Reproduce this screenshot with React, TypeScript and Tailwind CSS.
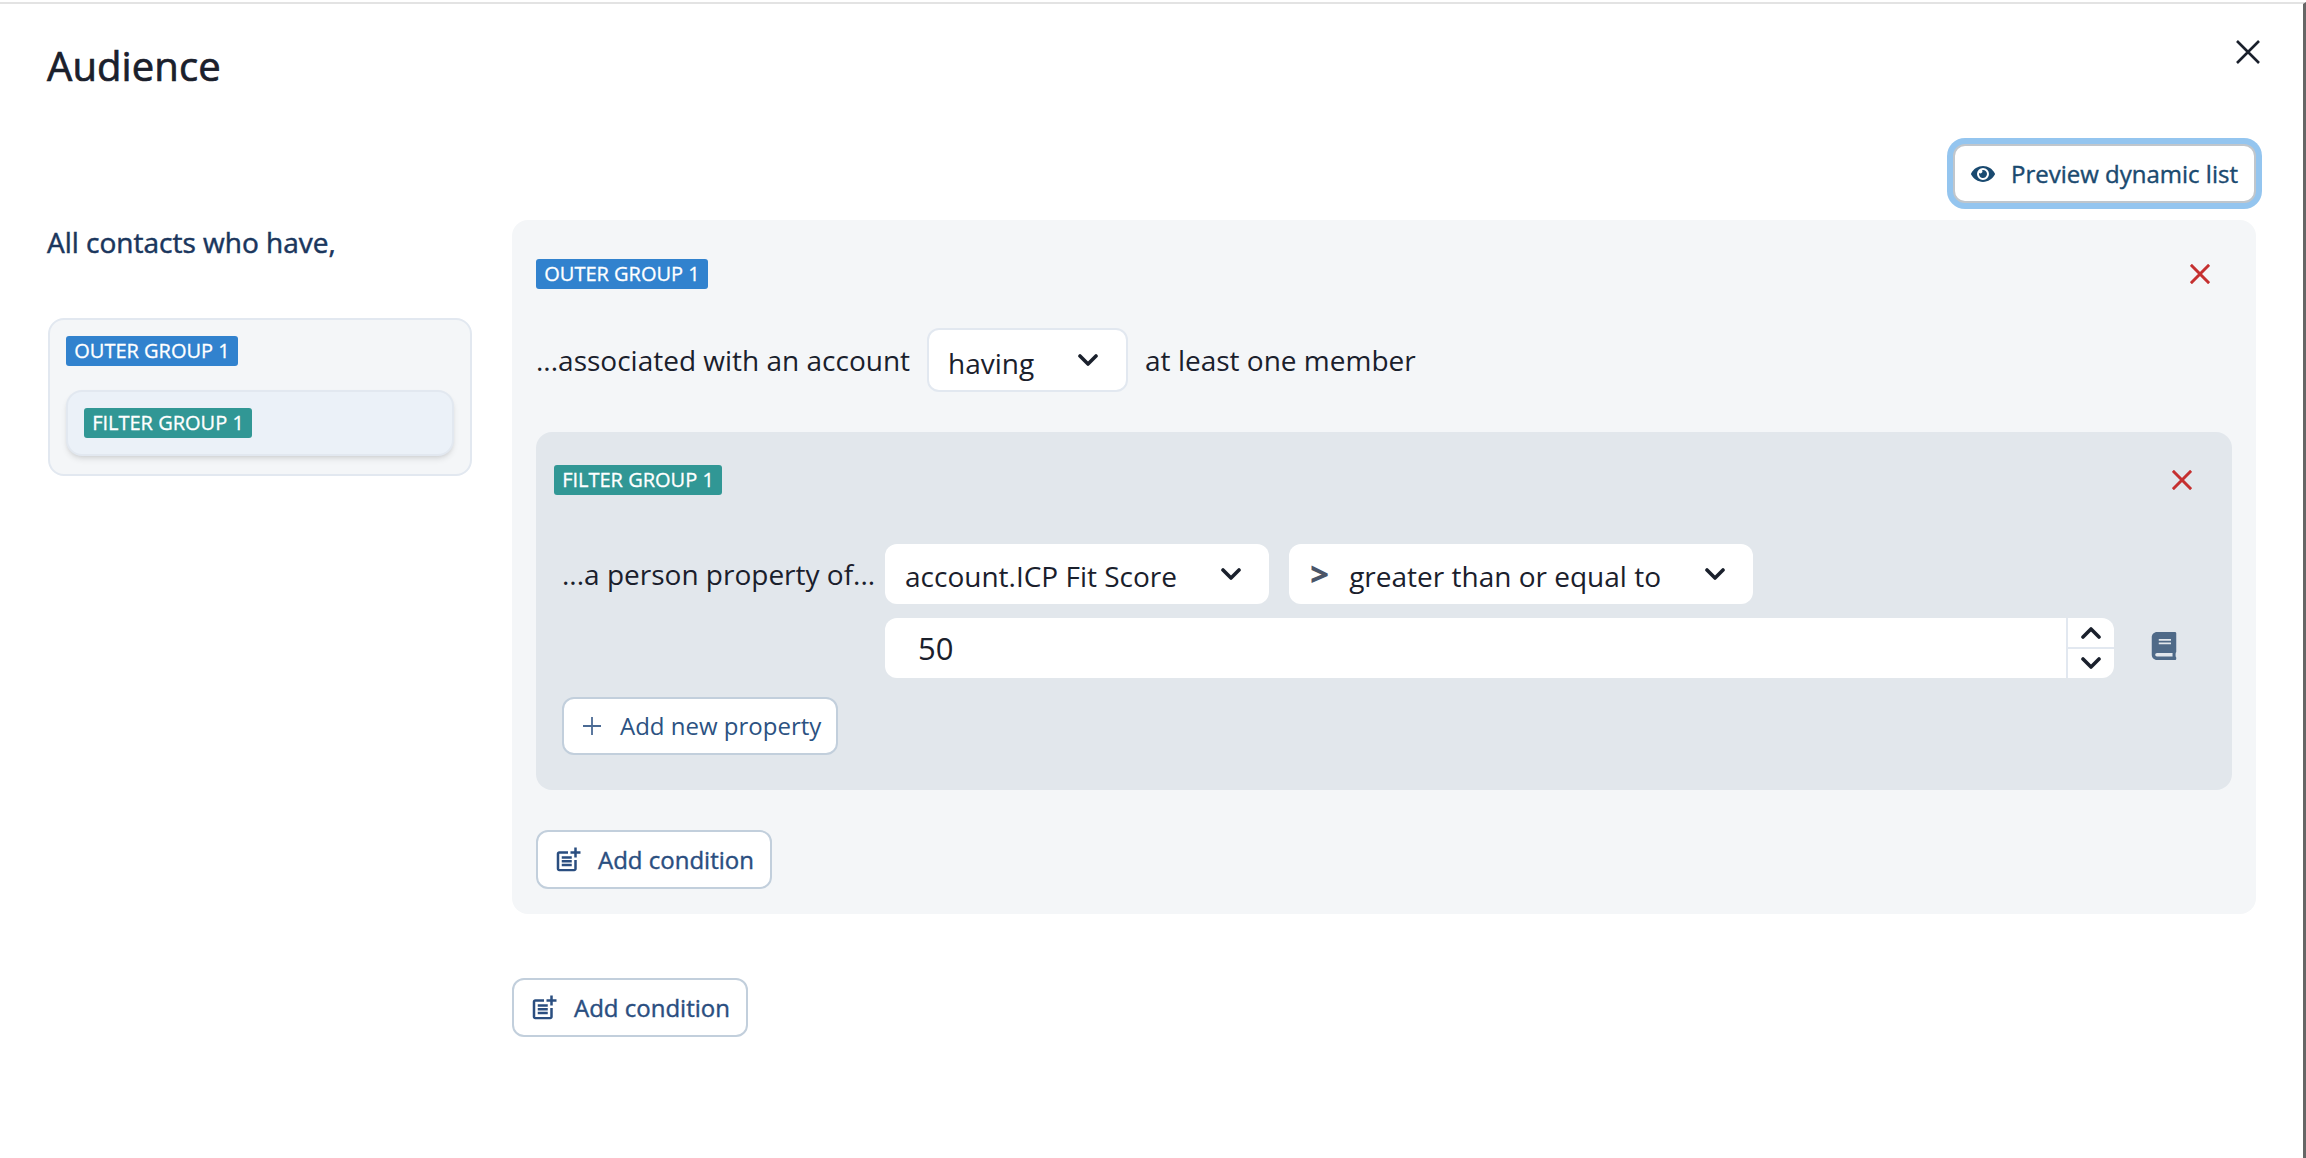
import React from "react";
import { FaBook, FaEye } from "react-icons/fa";
import { MdOutlinePostAdd } from "react-icons/md";

function Cross({ size, stroke, color }: { size: number; stroke: number; color: string }) {
  return (
    <svg width={size} height={size} viewBox="0 0 24 24" fill="none" stroke={color} strokeWidth={stroke} strokeLinecap="butt" className="shrink-0">
      <path d="M1 1 L23 23 M23 1 L1 23" />
    </svg>
  );
}

function Chevron({ up = false }: { up?: boolean }) {
  return (
    <svg width="20" height="13" viewBox="0 0 20 13" fill="none" stroke="#1a202c" strokeWidth="3.6" strokeLinecap="round" strokeLinejoin="round" className="shrink-0">
      <path d={up ? "M2 11 L10 3 L18 11" : "M2 2 L10 10 L18 2"} />
    </svg>
  );
}

function AddCondition({ className = "" }: { className?: string }) {
  return (
    <button className={`flex h-[59px] w-[236px] items-center rounded-[12px] border-2 border-[#c2cfdc] bg-white pl-[17px] text-[24px] text-[#2a4e80] [-webkit-text-stroke:0.4px_currentColor] ${className}`}>
      <MdOutlinePostAdd size={30} className="-ml-[2px] shrink-0" />
      <span className="ml-[15px]">Add condition</span>
    </button>
  );
}

export default function App() {
  return (
    <div className="h-[1158px] w-full overflow-hidden bg-white pt-[2px] font-['Open_Sans',sans-serif] text-[#1a202c]">
      <div className="flex h-[1156px] flex-col border-r-[3px] border-t-[2px] border-r-[#666666] border-t-[#e3e3e3] pl-[48px] pr-[47px]">
        <header className="flex h-[140px] items-start justify-between">
          <h1 className="-ml-[1px] mt-[34px] text-[40px] leading-[56px] tracking-[0.1px] text-[#1a202c] [-webkit-text-stroke:0.7px_currentColor]">Audience</h1>
          <button className="-mr-[4px] mt-[36px]">
            <Cross size={24} stroke={2.6} color="#1a202c" />
          </button>
        </header>

        <div className="flex justify-end">
          <button className="flex h-[59px] w-[303px] items-center rounded-[12px] border-2 border-[#c0c6cc] bg-white pl-[16px] text-[24px] text-[#1a4a70] ring-[6px] ring-[#94c5ef] [-webkit-text-stroke:0.4px_currentColor]">
            <FaEye size={24} className="shrink-0" />
            <span className="ml-[16px] whitespace-nowrap">Preview dynamic list</span>
          </button>
        </div>

        <div className="mt-[17px] flex gap-[40px]">
          <aside className="w-[424px] shrink-0">
            <p className="-ml-[1px] mt-[2px] text-[28px] leading-[40px] text-[#1a365d] [-webkit-text-stroke:0.5px_currentColor]">All contacts who have,</p>
            <div className="mt-[56px] h-[158px] rounded-[16px] border-2 border-[#e2e8f0] bg-[#f4f6f8] px-[16px] pt-[16px]">
              <span className="flex h-[30px] w-[172px] items-center justify-center rounded-[3px] bg-[#3182ce] text-[20px] text-white [-webkit-text-stroke:0.3px_currentColor]">OUTER GROUP 1</span>
              <div className="mt-[24px] h-[66px] rounded-[16px] border-2 border-[#e2e8f0] bg-[#ebf1f8] pl-[16px] pt-[16px] shadow-md">
                <span className="flex h-[30px] w-[168px] items-center justify-center rounded-[3px] bg-[#319795] text-[20px] text-white [-webkit-text-stroke:0.3px_currentColor]">FILTER GROUP 1</span>
              </div>
            </div>
          </aside>

          <main className="min-w-0 flex-1">
            <section className="rounded-[16px] bg-[#f4f6f8] px-[24px] pb-[25px] pt-[39px]">
              <div className="flex h-[30px] items-center justify-between pr-[22px]">
                <span className="flex h-[30px] w-[172px] items-center justify-center rounded-[3px] bg-[#3182ce] text-[20px] text-white [-webkit-text-stroke:0.3px_currentColor]">OUTER GROUP 1</span>
                <Cross size={20} stroke={3.6} color="#c53030" />
              </div>

              <div className="mt-[39px] flex h-[64px] items-center gap-[17px] text-[28px]">
                <span className="whitespace-nowrap">...associated with an account</span>
                <div className="flex h-[64px] w-[201px] items-center justify-between rounded-[12px] border-2 border-[#e2e8f0] bg-white pl-[19px] pr-[28px]">
                  <span className="pt-[5px]">having</span>
                  <Chevron />
                </div>
                <span className="whitespace-nowrap">at least one member</span>
              </div>

              <div className="mt-[40px] h-[358px] rounded-[16px] bg-[#e2e7ec] pl-[18px] pr-[40px] pt-[33px]">
                <div className="flex h-[30px] items-center justify-between">
                  <span className="flex h-[30px] w-[168px] items-center justify-center rounded-[3px] bg-[#319795] text-[20px] text-white [-webkit-text-stroke:0.3px_currentColor]">FILTER GROUP 1</span>
                  <Cross size={20} stroke={3.6} color="#c53030" />
                </div>

                <div className="ml-[8px] mt-[49px] grid grid-cols-[323px_1fr]">
                  <span className="h-[60px] whitespace-nowrap text-[28px] leading-[60px]">...a person property of...</span>
                  <div className="flex gap-[20px] text-[28px]">
                    <div className="flex h-[60px] w-[384px] items-center justify-between rounded-[12px] bg-white pl-[20px] pr-[28px]">
                      <span className="whitespace-nowrap pt-[3px]">account.ICP Fit Score</span>
                      <Chevron />
                    </div>
                    <div className="flex h-[60px] w-[464px] items-center rounded-[12px] bg-white pl-[22px] pr-[28px]">
                      <span className="text-[30px] leading-none text-[#4a5568] [-webkit-text-stroke:2px_currentColor]">&gt;</span>
                      <span className="ml-[21px] flex-1 whitespace-nowrap pt-[3px]">greater than or equal to</span>
                      <Chevron />
                    </div>
                  </div>
                  <div className="col-start-2 mt-[14px] flex items-center">
                    <div className="flex h-[60px] w-[1229px] rounded-[12px] bg-white">
                      <span className="flex flex-1 items-center pl-[33px] text-[31px]">50</span>
                      <div className="flex w-[48px] flex-col border-l-2 border-[#e2e8f0]">
                        <div className="flex flex-1 items-center justify-center border-b-2 border-[#e2e8f0]">
                          <Chevron up />
                        </div>
                        <div className="flex flex-1 items-center justify-center">
                          <Chevron />
                        </div>
                      </div>
                    </div>
                    <FaBook size={28} className="ml-[36px] -translate-y-[2px] text-[#4f6a88]" />
                  </div>
                  <button className="col-span-2 mt-[19px] flex h-[58px] w-[276px] items-center rounded-[12px] border-2 border-[#c2cfdc] bg-white pl-[19px] text-[24px] text-[#2c5282]">
                    <svg width="18" height="18" viewBox="0 0 18 18" fill="none" stroke="#4a6a94" strokeWidth="1.8" className="shrink-0">
                      <path d="M9 0 V18 M0 9 H18" />
                    </svg>
                    <span className="ml-[19px] whitespace-nowrap">Add new property</span>
                  </button>
                </div>
              </div>

              <AddCondition className="mt-[40px]" />
            </section>

            <AddCondition className="mt-[64px]" />
          </main>
        </div>
      </div>
    </div>
  );
}
